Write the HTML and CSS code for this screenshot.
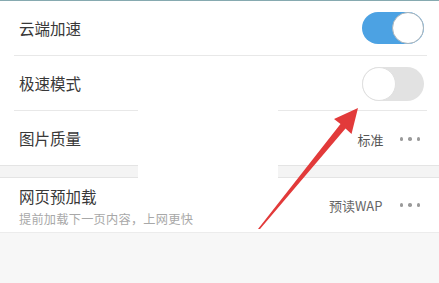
FILE: index.html
```html
<!DOCTYPE html>
<html lang="zh">
<head>
<meta charset="utf-8">
<link rel="stylesheet" href="styles.css">
</head>
<body>
<div class="page">
  <div class="topline"></div>
  <div class="group">
    <div class="row">
      <span class="label">云端加速</span>
      <span class="switch on"><span class="knob"></span></span>
    </div>
    <div class="row">
      <span class="label">极速模式</span>
      <span class="switch off"><span class="knob"></span></span>
    </div>
    <div class="row last">
      <span class="label">图片质量</span>
      <span class="value">标准<span class="dots"><i></i><i></i><i></i></span></span>
    </div>
  </div>
  <div class="band"></div>
  <div class="group g2">
    <div class="row tall last">
      <div class="texts">
        <span class="label">网页预加载</span>
        <span class="sub">提前加载下一页内容，上网更快</span>
      </div>
      <span class="value v2">预读WAP<span class="dots"><i></i><i></i><i></i></span></span>
    </div>
  </div>
  <div class="patch"></div>
  <svg class="arrow" width="439" height="283" viewBox="0 0 439 283">
    <polygon points="258,229 340.5,124 334,119 358,108 351.5,134 345.5,128.5 260,229" fill="#e23a3a"/>
  </svg>
</div>
</body>
</html>
```

FILE: styles.css
```css
html, body {
  margin: 0;
  padding: 0;
}
body {
  background: #f7f7f7;
  font-family: "Noto Sans CJK SC", "Noto Sans", sans-serif;
  width: 439px;
  height: 283px;
  overflow: hidden;
}
.page {
  position: relative;
  width: 439px;
  height: 283px;
}
.topline {
  height: 1px;
  background: #86aab0;
}
.group {
  background: #fff;
  border-bottom: 1px solid #e4e4e4;
}
.row {
  height: 54px;
  margin: 0 12px 0 14px;
  padding: 0 3px 0 5px;
  border-bottom: 1px solid #e8e8e8;
  display: flex;
  align-items: center;
  justify-content: space-between;
}
.row.last {
  border-bottom: none;
}
.label {
  font-size: 15.5px;
  color: #383838;
  line-height: 20px;
}
.switch {
  width: 62px;
  height: 32px;
  border-radius: 17px;
  display: flex;
  align-items: center;
  box-sizing: border-box;
}
.switch.on {
  background: #4ca2e3;
  justify-content: flex-end;
}
.switch.off {
  background: #e2e2e2;
  justify-content: flex-start;
  height: 34px;
  margin-top: 2px;
}
.knob {
  width: 32px;
  height: 32px;
  border-radius: 50%;
  background: #fff;
  box-sizing: border-box;
  border: 1px solid #a9b4bb;
}
.switch.off .knob {
  width: 34px;
  height: 34px;
  border-color: #e0e0e0;
}
.value {
  display: flex;
  align-items: center;
  font-size: 13px;
  color: #555;
  padding-top: 2px;
}
.dots {
  display: flex;
  gap: 5px;
  margin-left: 16px;
  margin-right: 4px;
}
.dots i {
  width: 3.5px;
  height: 3.5px;
  border-radius: 50%;
  background: #9a9a9a;
}
.band {
  height: 11px;
  background: #f4f4f4;
}
.g2 {
  border-top: 1px solid #e4e4e4;
  border-bottom: 1px solid #ececec;
}
.row.tall {
  height: 54px;
}
.texts {
  display: flex;
  flex-direction: column;
  padding-top: 2px;
}
.sub {
  font-size: 12.2px;
  color: #a8a8a8;
  line-height: 16px;
  margin-top: 5px;
  letter-spacing: 0.25px;
}
.v2 {
  color: #666;
  padding-top: 0;
  margin-top: 0;
}
.v2 .dots {
  margin-left: 17px;
}
.patch {
  position: absolute;
  left: 138px;
  top: 104px;
  width: 140px;
  height: 80px;
  background: #fff;
}
.arrow {
  position: absolute;
  left: 0;
  top: 0;
}
```
